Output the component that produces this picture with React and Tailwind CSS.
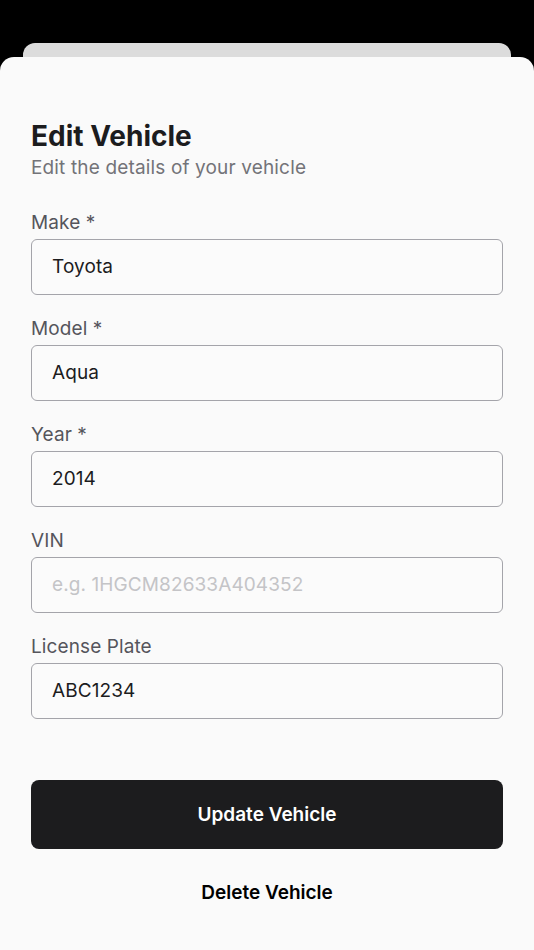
import React from 'react'

const fields = [
  { label: 'Make *', value: 'Toyota' },
  { label: 'Model *', value: 'Aqua' },
  { label: 'Year *', value: '2014' },
  { label: 'VIN', value: '', placeholder: 'e.g. 1HGCM82633A404352' },
  { label: 'License Plate', value: 'ABC1234' },
]

const Field = ({ label, value, placeholder }) => (
  <div className="flex flex-col">
    <label className="text-[19px] leading-6 text-[#55555c] tracking-[0.1px]">{label}</label>
    <div className="mt-1 h-14 rounded-[6px] border border-[#a4a4aa] bg-[#fbfbfb] px-5 pt-px flex items-center">
      {value ? (
        <span className="text-[19px] text-[#1c1c1e] tracking-[0.1px]">{value}</span>
      ) : (
        <span className="text-[19px] text-[#c4c4c7] tracking-[0.1px]">{placeholder}</span>
      )}
    </div>
  </div>
)

export default function App() {
  return (
    <div
      className="w-[534px] h-[950px] bg-black overflow-hidden flex flex-col"
      style={{ fontFamily: 'Inter, "Noto Sans", sans-serif' }}
    >
      {/* stacked sheet behind */}
      <div className="mt-[43px] mx-[23px] h-[14px] rounded-t-[12px] bg-[#dcdcdc] shrink-0" />

      {/* front sheet */}
      <div className="flex-1 rounded-t-[14px] bg-[#fafafa] px-[31px] pt-[62px]">
        <h1 className="text-[28px] leading-[34px] font-bold text-[#1c1c1e]">
          Edit Vehicle
        </h1>
        <p className="mt-[3px] text-[19px] leading-6 text-[#737378] tracking-[0.15px]">
          Edit the details of your vehicle
        </p>

        <div className="mt-[31px] flex flex-col gap-[22px]">
          {fields.map((f) => (
            <Field key={f.label} {...f} />
          ))}
        </div>

        <button className="mt-[61px] w-full h-[69px] pt-[2px] rounded-[8px] bg-[#1c1c1e] text-white text-[19px] font-semibold">
          Update Vehicle
        </button>
        <div className="mt-[32px] text-center text-[19px] leading-6 font-semibold text-black">
          Delete Vehicle
        </div>
      </div>
    </div>
  )
}
